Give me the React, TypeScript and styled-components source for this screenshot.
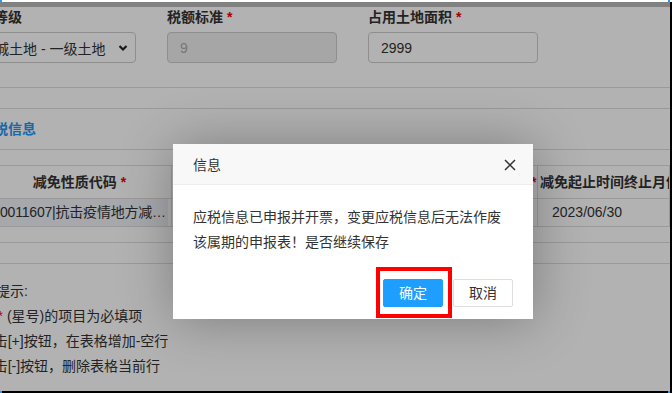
import styled, { createGlobalStyle } from "styled-components";

const GlobalStyle = createGlobalStyle`
  html, body { margin: 0; padding: 0; overflow: hidden; }
  body {
    font-family: "Liberation Sans", "Noto Sans CJK SC", sans-serif;
    font-size: 14px;
    color: #333;
  }
  * { box-sizing: border-box; }
`;

const Frame = styled.div`
  width: 672px;
  height: 393px;
  display: flex;
  flex-direction: column;
  background: #000;
`;

const EdgeBar = styled.div<{ $bg: string }>`
  flex: none;
  height: 2px;
  display: flex;
  justify-content: space-between;
  padding-right: 2px;
  background: ${(p) => p.$bg};
`;

const Handle = styled.span`
  width: 2px;
  height: 2px;
  background: #1e9fff;
`;

const Middle = styled.div`
  flex: 1;
  display: flex;
  min-height: 0;
`;

const Viewport = styled.div`
  position: relative;
  flex: 1;
  overflow: hidden;
  background: #fff;
`;

const RightEdge = styled.div`
  width: 2px;
  background: #000;
`;

const Page = styled.div`
  width: 710px;
  margin-left: -40px;
`;

const TopBand = styled.div`
  height: 5px;
  background: #b9b9b9;
`;

const FormSection = styled.div`
  display: grid;
  grid-template-columns: repeat(3, 170px);
  column-gap: 31px;
  padding: 0 0 24px 6px;
  border-bottom: 1px solid #ddd;
`;

const Field = styled.div`
  display: flex;
  flex-direction: column;
  gap: 5px;
`;

const Label = styled.div`
  font-weight: bold;
  line-height: 20px;
  white-space: nowrap;
`;

const Star = styled.span`
  color: #e00;
  margin-left: 4px;
  font-weight: bold;
`;

const InputBox = styled.div<{ $disabled?: boolean }>`
  height: 31px;
  display: flex;
  align-items: center;
  justify-content: space-between;
  padding: 0 7px 0 12px;
  border: 1px solid #ccc;
  border-radius: 4px;
  background: ${(p) => (p.$disabled ? "#eee" : "#fff")};
  color: ${(p) => (p.$disabled ? "#aaa" : "#333")};
  white-space: nowrap;
`;

const SelectBox = styled(InputBox)`
  padding-left: 14px;
`;

const Divider = styled.div`
  height: 21px;
  border-bottom: 1px solid #ddd;
`;

const SectionTitle = styled.div`
  padding: 10px 0 10px 20px;
  line-height: 20px;
  font-weight: bold;
  color: #2196f3;
  border-bottom: 1px solid #ddd;
`;

const Table = styled.div`
  display: grid;
  grid-template-columns: 184px 213px 153px 1fr;
  margin: 15px 0 0 28px;
  border-top: 1px solid #ddd;
`;

const HeadCell = styled.div<{ $align: "center" | "left" }>`
  height: 33px;
  line-height: 32px;
  padding-left: ${(p) => (p.$align === "left" ? "2px" : "0")};
  text-align: ${(p) => p.$align};
  font-weight: bold;
  white-space: nowrap;
  overflow: hidden;
  border-bottom: 1px solid #ddd;
  border-right: 1px solid #ddd;
`;

const DataCell = styled.div`
  height: 28px;
  line-height: 27px;
  padding-left: 14px;
  white-space: nowrap;
  overflow: hidden;
  border-bottom: 1px solid #ddd;
  border-right: 1px solid #ddd;
`;

const CodeCell = styled(DataCell)`
  padding: 0 3px 0 0;
`;

const CodeValue = styled.div`
  height: 100%;
  padding-left: 12px;
  background: #eef1f6;
  overflow: hidden;
  text-overflow: ellipsis;
  letter-spacing: -0.2px;
`;

const ScrollRow = styled.div<{ $h: number }>`
  height: ${(p) => p.$h}px;
  border-bottom: 1px solid #ddd;
`;

const Tips = styled.div`
  padding: 15px 0 0 8px;
  line-height: 25px;
  white-space: nowrap;
`;

const RedMark = styled.span`
  color: #f00;
`;

const Shade = styled.div`
  position: absolute;
  inset: 0;
  background: rgba(0, 0, 0, 0.3);
`;

const Dialog = styled.div`
  position: absolute;
  left: 173px;
  top: 142px;
  width: 360px;
  background: #fff;
  box-shadow: 1px 1px 50px rgba(0, 0, 0, 0.3);
`;

const DialogHead = styled.div`
  height: 41px;
  display: flex;
  align-items: center;
  justify-content: space-between;
  padding: 0 17px 0 20px;
  background: #f8f8f8;
  border-bottom: 1px solid #eee;
  color: #333;
`;

const CloseIcon = styled.svg`
  width: 12px;
  height: 12px;
  margin-top: 1px;
`;

const DialogBody = styled.div`
  padding: 20px;
  line-height: 25px;
  color: #333;
`;

const ButtonBar = styled.div`
  display: flex;
  justify-content: flex-end;
  padding: 4px 15px 12px;
`;

const DialogButton = styled.span<{ $primary?: boolean }>`
  position: relative;
  height: 28px;
  line-height: 26px;
  margin: 0 5px;
  padding: 0 15px;
  border: 1px solid ${(p) => (p.$primary ? "#1e9fff" : "#dedede")};
  border-radius: 2px;
  background: ${(p) => (p.$primary ? "#1e9fff" : "#fff")};
  color: ${(p) => (p.$primary ? "#fff" : "#333")};
`;

const Highlighted = styled(DialogButton)`
  &::after {
    content: "";
    position: absolute;
    left: -8px;
    right: -10px;
    top: -13px;
    bottom: -12px;
    border: 4px solid #f00;
  }
`;

export default function App() {
  return (
    <>
      <GlobalStyle />
      <Frame>
        <EdgeBar $bg="#fff">
          <Handle />
          <Handle />
        </EdgeBar>
        <Middle>
          <Viewport>
            <Page>
              <TopBand />
              <FormSection>
                <Field>
                  <Label>土地等级</Label>
                  <SelectBox>
                    县城土地 - 一级土地
                    <svg width="10" height="8" viewBox="0 0 10 8">
                      <polyline points="1.5,2 5,5.5 8.5,2" fill="none" stroke="#222" strokeWidth="2.2" />
                    </svg>
                  </SelectBox>
                </Field>
                <Field>
                  <Label>
                    税额标准<Star>*</Star>
                  </Label>
                  <InputBox $disabled>9</InputBox>
                </Field>
                <Field>
                  <Label>
                    占用土地面积<Star>*</Star>
                  </Label>
                  <InputBox>2999</InputBox>
                </Field>
              </FormSection>
              <Divider />
              <SectionTitle>应税信息</SectionTitle>
              <Table>
                <HeadCell $align="center">
                  减免性质代码<Star>*</Star>
                </HeadCell>
                <HeadCell $align="center">
                  减免税额<Star>*</Star>
                </HeadCell>
                <HeadCell $align="left">
                  减免起止时间起始月份<Star>*</Star>
                </HeadCell>
                <HeadCell $align="left">
                  减免起止时间终止月份<Star>*</Star>
                </HeadCell>
                <CodeCell>
                  <CodeValue>0011607|抗击疫情地方减免城镇土地使用税</CodeValue>
                </CodeCell>
                <DataCell>2999.00</DataCell>
                <DataCell>2023/01/01</DataCell>
                <DataCell>2023/06/30</DataCell>
              </Table>
              <ScrollRow $h={16} />
              <ScrollRow $h={21} />
              <Tips>
                <div>温馨提示:</div>
                <div>
                  1.带 <RedMark>*</RedMark> (星号)的项目为必填项
                </div>
                <div>2.点击[+]按钮，在表格增加-空行</div>
                <div>3.点击[-]按钮，删除表格当前行</div>
              </Tips>
            </Page>
            <Shade />
            <Dialog>
              <DialogHead>
                信息
                <CloseIcon viewBox="0 0 12 12">
                  <path d="M1 1L11 11M11 1L1 11" stroke="#333" strokeWidth="1.5" fill="none" />
                </CloseIcon>
              </DialogHead>
              <DialogBody>应税信息已申报并开票，变更应税信息后无法作废该属期的申报表！是否继续保存</DialogBody>
              <ButtonBar>
                <Highlighted $primary>确定</Highlighted>
                <DialogButton>取消</DialogButton>
              </ButtonBar>
            </Dialog>
          </Viewport>
          <RightEdge />
        </Middle>
        <EdgeBar $bg="#000">
          <Handle />
          <Handle />
        </EdgeBar>
      </Frame>
    </>
  );
}
